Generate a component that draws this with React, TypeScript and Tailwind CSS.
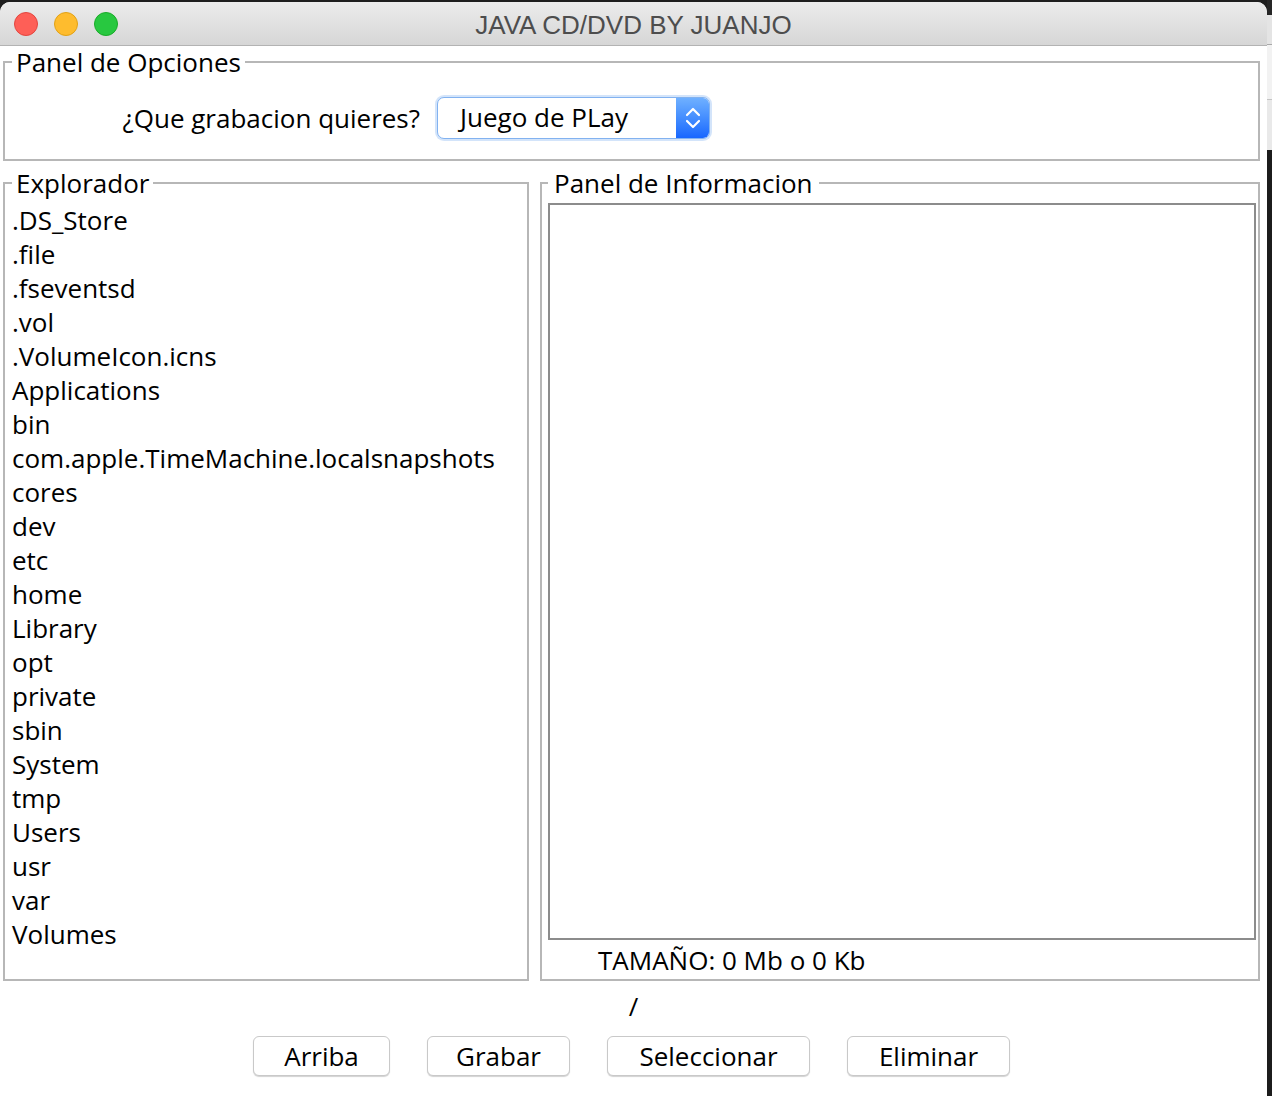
const files = [
	".DS_Store",
	".file",
	".fseventsd",
	".vol",
	".VolumeIcon.icns",
	"Applications",
	"bin",
	"com.apple.TimeMachine.localsnapshots",
	"cores",
	"dev",
	"etc",
	"home",
	"Library",
	"opt",
	"private",
	"sbin",
	"System",
	"tmp",
	"Users",
	"usr",
	"var",
	"Volumes",
];

const buttons = [
	{ label: "Arriba", w: "w-[137px]" },
	{ label: "Grabar", w: "w-[143px]" },
	{ label: "Seleccionar", w: "w-[203px]" },
	{ label: "Eliminar", w: "w-[163px]" },
];

const font = { fontFamily: '"Open Sans", "DejaVu Sans", sans-serif' };

const App = () => {
	return (
		<div className="flex w-[1272px] h-[1096px] overflow-hidden bg-[#1e1e1e]">
			<div className="flex flex-col w-[1267px] mt-[2px] rounded-t-[10px] overflow-hidden bg-white">
				{/* title bar */}
				<div className="grid grid-cols-[1fr_auto_1fr] items-center h-[44px] shrink-0 bg-gradient-to-b from-[#ececec] to-[#d6d6d6] border-b border-[#b3b3b3]">
					<div className="flex items-center gap-[16px] pl-[14px]">
						<span className="w-[24px] h-[24px] rounded-full bg-[#fe5f57] border border-[#e2463f]" />
						<span className="w-[24px] h-[24px] rounded-full bg-[#febc2e] border border-[#e1a116]" />
						<span className="w-[24px] h-[24px] rounded-full bg-[#28c840] border border-[#1aab29]" />
					</div>
					<p
						className="text-[26px] leading-none text-[#4d4d4d] pt-[2px]"
						style={{ fontFamily: '"Liberation Sans", Arial, sans-serif' }}
					>
						JAVA CD/DVD BY JUANJO
					</p>
					<div />
				</div>

				<div className="flex flex-col text-black text-[26px]" style={font}>
					{/* Panel de Opciones */}
					<fieldset className="ml-[3px] w-[1257px] border-2 border-[#b7b7b7] pl-[7px] pt-[19px] pb-[20px]">
						<legend className="px-[4px] leading-[32px]">Panel de Opciones</legend>
						<div className="flex items-center gap-[17px]">
							<p className="w-[408px] text-right leading-[36px]">¿Que grabacion quieres?</p>
							<div className="flex w-[273px] h-[42px] rounded-[7px] border border-[#82b2f0] shadow-[0_0_0_2px_rgba(130,178,240,0.35)] overflow-hidden bg-white">
								<p className="flex-1 pl-[22px] leading-[38px]">Juego de PLay</p>
								<div className="flex items-center justify-center w-[33px] bg-gradient-to-b from-[#6fb0ff] to-[#1766ff]">
									<svg width="18" height="30" viewBox="0 0 18 30" fill="none" stroke="white" strokeWidth="2.2" strokeLinecap="round" strokeLinejoin="round">
										<path d="M3 12 L9 6 L15 12" />
										<path d="M3 18 L9 24 L15 18" />
									</svg>
								</div>
							</div>
						</div>
					</fieldset>

					<div className="flex gap-[11px] ml-[3px] mt-[6px] h-[814px]">
						{/* Explorador */}
						<fieldset className="w-[526px] border-2 border-[#b7b7b7] pl-[7px] pt-[4px]">
							<legend className="px-[4px] leading-[32px]">Explorador</legend>
							<ul className="flex flex-col">
								{files.map((f) => (
									<li key={f} className="leading-[34px]">
										{f}
									</li>
								))}
							</ul>
						</fieldset>

						{/* Panel de Informacion */}
						<fieldset className="w-[720px] border-2 border-[#b7b7b7] pl-[6px] pt-[4px]">
							<legend className="px-[6px] leading-[32px]">Panel de Informacion</legend>
							<div className="w-[708px] h-[737px] border-2 border-[#8c8c8c] bg-white" />
							<p className="pl-[50px] leading-[34px] mt-[3px]">TAMAÑO: 0 Mb o 0 Kb</p>
						</fieldset>
					</div>

					<p className="text-center leading-[34px] mt-[8px]">/</p>

					<div className="flex justify-center gap-[37px] mt-[13px] pr-[4px]">
						{buttons.map((b) => (
							<button
								key={b.label}
								className={`${b.w} h-[40px] rounded-[6px] border border-[#c9c9c9] bg-white shadow-[0_1px_1px_rgba(0,0,0,0.18)] leading-[38px]`}
							>
								{b.label}
							</button>
						))}
					</div>
				</div>
			</div>

			{/* desktop edge */}
			<div className="flex flex-col w-[5px]">
				<div className="h-[15px] bg-[#262626]" />
				<div className="h-[30px] bg-[#e4e4e4] border-b border-[#a9a9a9]" />
				<div className="h-[55px] bg-[#f2f2f2] border-b border-[#c4c4c4]" />
				<div className="h-[50px] bg-[#e9e9e9]" />
				<div className="flex-1 bg-[#1c1c1c]" />
			</div>
		</div>
	);
};

export default App;
